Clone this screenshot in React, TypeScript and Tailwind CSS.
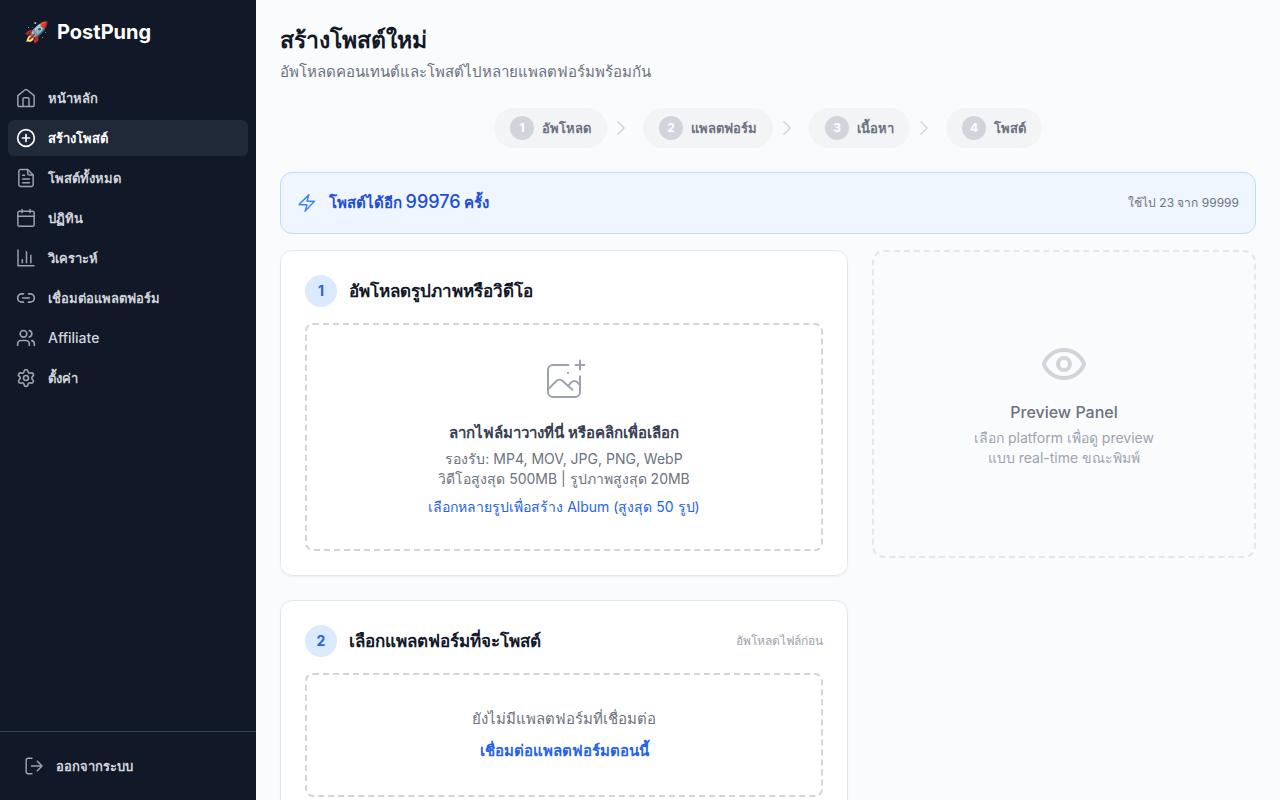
import type { ReactNode } from "react";
import { Eye, Settings, Users } from "lucide-react";
import clsx from "clsx";

interface IconProps {
  className?: string;
  width?: number;
  children: ReactNode;
}

function Icon({ className = "size-5", width = 1.75, children }: IconProps) {
  return (
    <svg
      viewBox="0 0 24 24"
      fill="none"
      stroke="currentColor"
      strokeWidth={width}
      strokeLinecap="round"
      strokeLinejoin="round"
      aria-hidden="true"
      className={clsx("shrink-0", className)}
    >
      {children}
    </svg>
  );
}

const icons = {
  home: (
    <Icon>
      <path d="M2.2 9.2 10.6 2.4a2.2 2.2 0 0 1 2.8 0l8.4 6.8V20a2.2 2.2 0 0 1-2.2 2.2H4.4A2.2 2.2 0 0 1 2.2 20Z" />
      <path d="M8.4 22v-9.2a1.2 1.2 0 0 1 1.2-1.2h4.8a1.2 1.2 0 0 1 1.2 1.2V22" />
    </Icon>
  ),
  create: (
    <Icon width={2}>
      <circle cx="12" cy="12" r="10" />
      <path d="M12 7.8v8.4M7.8 12h8.4" />
    </Icon>
  ),
  posts: (
    <Icon>
      <path d="M14 1.8H5.4a2 2 0 0 0-2 2v16.4a2 2 0 0 0 2 2h13.2a2 2 0 0 0 2-2V8.4Z" />
      <path d="M14 1.8v4.6a2 2 0 0 0 2 2h4.6M8 8.6h2.4M8 13.2h8M8 17.6h8" />
    </Icon>
  ),
  calendar: (
    <Icon>
      <rect x="2.2" y="4" width="19.6" height="18" rx="2" />
      <path d="M2.2 9.8h19.6M7.2 1.8v4M16.8 1.8v4" />
    </Icon>
  ),
  analytics: (
    <Icon>
      <path d="M2.4 2.4v18.8h19.2M7.6 13.8v3.8M12.6 4.6v13M17.8 8.6v9" />
    </Icon>
  ),
  link: (
    <Icon width={2}>
      <path d="M9 17H7A5 5 0 0 1 7 7h2M15 7h2a5 5 0 0 1 0 10h-2M8 12h8" />
    </Icon>
  ),
  users: <Users className="size-5 shrink-0" strokeWidth={2} />,
  settings: <Settings className="size-5 shrink-0" strokeWidth={2} />,
};

const thaiItem = "text-[13px]/5 font-bold";

const navItems = [
  { label: "หน้าหลัก", icon: icons.home },
  { label: "สร้างโพสต์", icon: icons.create, active: true },
  { label: "โพสต์ทั้งหมด", icon: icons.posts },
  { label: "ปฏิทิน", icon: icons.calendar },
  { label: "วิเคราะห์", icon: icons.analytics },
  { label: "เชื่อมต่อแพลตฟอร์ม", icon: icons.link },
  { label: "Affiliate", icon: icons.users, latin: true },
  { label: "ตั้งค่า", icon: icons.settings },
];

const steps = ["อัพโหลด", "แพลตฟอร์ม", "เนื้อหา", "โพสต์"];

function Sidebar() {
  return (
    <aside className="sticky top-0 flex h-screen w-64 shrink-0 flex-col bg-[#111827]">
      <div className="flex h-16 items-center gap-2 px-6 text-xl font-bold text-white">
        <span aria-hidden="true">🚀</span>
        <span>PostPung</span>
      </div>
      <nav className="flex-1 space-y-1 px-2 py-4">
        {navItems.map((item) => (
          <a
            key={item.label}
            href="#"
            aria-current={item.active ? "page" : undefined}
            className={clsx(
              "flex items-center gap-3 rounded-md px-2 py-2",
              item.latin ? "text-sm font-medium" : thaiItem,
              item.active ? "bg-[#1f2937] text-white" : "text-[#d1d5db] hover:bg-[#1f2937]"
            )}
          >
            <span className={item.active ? "text-white" : "text-[#9ca3af]"}>{item.icon}</span>
            {item.label}
          </a>
        ))}
      </nav>
      <div className="border-t border-[#374151] p-4">
        <button type="button" className={clsx("flex w-full items-center gap-3 px-2 py-2 text-[#d1d5db]", thaiItem)}>
          <span className="text-[#9ca3af]">
            <Icon>
              <path d="M9.6 2.8H4.8a2.2 2.2 0 0 0-2.2 2.2v14a2.2 2.2 0 0 0 2.2 2.2h4.8M9 12h12.4M16 6.4l5.6 5.6-5.6 5.6" />
            </Icon>
          </span>
          ออกจากระบบ
        </button>
      </div>
    </aside>
  );
}

function Steps() {
  return (
    <ol className="mb-6 flex items-center justify-center gap-3">
      {steps.map((label, i) => (
        <li key={label} className="flex items-center gap-1">
          <div className="flex items-center gap-2 rounded-full bg-[#f3f4f6] px-4 py-2 text-[13px]/5 font-bold text-[#6b7280]">
            <span className="flex size-6 items-center justify-center rounded-full bg-[#d1d5db] text-xs font-bold text-white">
              {i + 1}
            </span>
            {label}
          </div>
          {i < steps.length - 1 && (
            <Icon className="size-5 text-[#d1d5db]">
              <path d="m8.25 4.5 7.5 7.5-7.5 7.5" />
            </Icon>
          )}
        </li>
      ))}
    </ol>
  );
}

function Card({ step, title, note, children }: { step: number; title: string; note?: string; children: ReactNode }) {
  return (
    <section className="rounded-xl border border-[#e5e7eb] bg-white p-6 shadow-xs">
      <div className="mb-4 flex items-center gap-3">
        <span className="flex size-8 items-center justify-center rounded-full bg-[#dbeafe] text-sm font-bold text-[#2563eb]">
          {step}
        </span>
        <h2 className="text-[17px]/7 font-semibold text-[#111827]">{title}</h2>
        {note && <span className="ml-auto text-xs text-[#9ca3af]">{note}</span>}
      </div>
      {children}
    </section>
  );
}

export default function App() {
  return (
    <div className="flex min-h-screen bg-[#fafbfd] font-['Inter',sans-serif]">
      <Sidebar />
      <main className="min-w-0 flex-1 p-6">
        <h1 className="text-[23px]/8 font-bold text-[#111827]">สร้างโพสต์ใหม่</h1>
        <p className="mt-1 mb-6 text-[15px]/6 text-[#6b7280]">อัพโหลดคอนเทนต์และโพสต์ไปหลายแพลตฟอร์มพร้อมกัน</p>

        <Steps />

        <div className="mb-4 flex items-center gap-3 rounded-xl border border-[#bfdbfe] bg-[#eff6ff] p-4">
          <Icon className="size-5 text-[#3b82f6]">
            <path d="m2.75 13.5 11.5-11.25L12 9.8h8.9L9.75 21.75 12 14.2H2.75Z" />
          </Icon>
          <p className="text-[15px]/7 font-bold text-[#1d4ed8]">
            โพสต์ได้อีก <span className="text-lg/5 font-medium">99976</span> ครั้ง
          </p>
          <span className="ml-auto text-xs text-[#6b7280]">ใช้ไป 23 จาก 99999</span>
        </div>

        <div className="grid grid-cols-[minmax(0,1fr)_384px] items-start gap-6">
          <div className="space-y-6">
            <Card step={1} title="อัพโหลดรูปภาพหรือวิดีโอ">
              <label className="flex cursor-pointer flex-col items-center rounded-lg border-2 border-dashed border-[#d1d5db] p-8 text-center">
                <input type="file" multiple accept="image/*,video/*" className="hidden" />
                <Icon className="size-12 text-[#9ca3af]" width={1}>
                  <path d="M14.2 4H6.4A2.4 2.4 0 0 0 4 6.4v11.2A2.4 2.4 0 0 0 6.4 20h11.2a2.4 2.4 0 0 0 2.4-2.4V9.6" />
                  <path d="m4 16.2 4.2-4.2a2.2 2.2 0 0 1 3.1 0l4.9 4.4M14.3 14.2l1.3-1.5a2.2 2.2 0 0 1 3.1 0L20 14" />
                  <path d="M20 1.8v4.4M17.8 4h4.4M14 7.9v.1" />
                </Icon>
                <span className="mt-4 text-[15px]/6 font-bold text-[#374151]">ลากไฟล์มาวางที่นี่ หรือคลิกเพื่อเลือก</span>
                <span className="mt-1 text-sm text-[#6b7280]">
                  รองรับ: MP4, MOV, JPG, PNG, WebP
                  <br />
                  วิดีโอสูงสุด 500MB | รูปภาพสูงสุด 20MB
                </span>
                <span className="mt-2 text-sm text-[#2563eb]">เลือกหลายรูปเพื่อสร้าง Album (สูงสุด 50 รูป)</span>
              </label>
            </Card>

            <Card step={2} title="เลือกแพลตฟอร์มที่จะโพสต์" note="อัพโหลดไฟล์ก่อน">
              <div className="flex flex-col items-center gap-2 rounded-lg border-2 border-dashed border-[#d1d5db] p-8">
                <p className="text-[15px]/6 text-[#6b7280]">ยังไม่มีแพลตฟอร์มที่เชื่อมต่อ</p>
                <a href="#" className="text-[15px]/6 font-bold text-[#2563eb]">
                  เชื่อมต่อแพลตฟอร์มตอนนี้
                </a>
              </div>
            </Card>
          </div>

          <aside className="flex flex-col items-center rounded-xl border-2 border-dashed border-[#e5e7eb] px-8 py-[88px] text-center">
            <Eye className="size-12 text-[#d1d5db]" strokeWidth={2} />
            <h3 className="mt-3 font-medium text-[#6b7280]">Preview Panel</h3>
            <p className="mt-1 text-sm text-[#9ca3af]">
              เลือก platform เพื่อดู preview
              <br />
              แบบ real-time ขณะพิมพ์
            </p>
          </aside>
        </div>
      </main>
    </div>
  );
}
